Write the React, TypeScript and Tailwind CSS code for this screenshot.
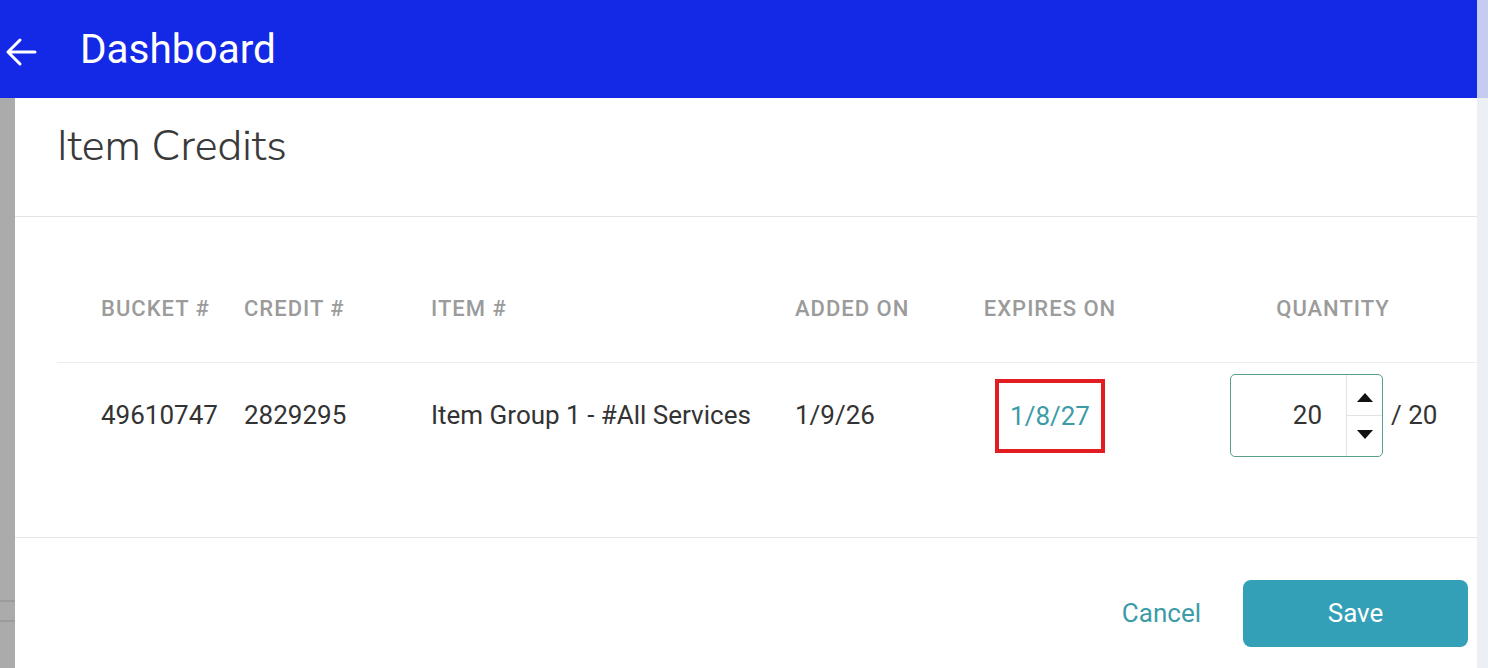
import React from "react";

const roboto = { fontFamily: "Roboto, 'Liberation Sans', sans-serif" };

function HeaderCell({ children, className = "" }: { children: React.ReactNode; className?: string }) {
  return (
    <div className={`text-[22px] font-medium uppercase tracking-[1px] text-[#9b9b9b] ${className}`}>
      {children}
    </div>
  );
}

function QuantityInput() {
  return (
    <div className="flex items-center">
      <div className="flex h-[83px] w-[153px] overflow-hidden rounded-[5px] border border-[#5a9e8e] bg-white">
        <div className="flex flex-1 items-center justify-end pr-[24px] text-[26px] text-[#333]">20</div>
        <div className="flex w-[36px] flex-col border-l border-[#e2e2e2]">
          <button className="flex flex-1 items-center justify-center border-b border-[#e2e2e2] pt-[4px]">
            <svg width="16" height="9" viewBox="0 0 16 9">
              <path d="M8 0 L16 9 L0 9 Z" fill="#111" />
            </svg>
          </button>
          <button className="flex flex-1 items-center justify-center pb-[4px]">
            <svg width="16" height="9" viewBox="0 0 16 9">
              <path d="M0 0 L16 0 L8 9 Z" fill="#111" />
            </svg>
          </button>
        </div>
      </div>
      <span className="ml-[8px] text-[26px] text-[#333]">/ 20</span>
    </div>
  );
}

export default function App() {
  return (
    <div className="flex h-[668px] w-[1488px] overflow-hidden bg-white" style={roboto}>
      <div className="flex w-[1477px] flex-col">
        {/* top bar */}
        <header className="flex h-[98px] shrink-0 items-center bg-[#1429e6] text-white">
          <svg className="ml-[5px] mt-[6px]" width="32" height="32" viewBox="0 0 32 32" fill="none">
            <path d="M30 16 H3 M15 4 L3 16 L15 28" stroke="white" strokeWidth="3" strokeLinecap="round" strokeLinejoin="round" />
          </svg>
          <h1 className="ml-[43px] text-[40.5px] leading-none">Dashboard</h1>
        </header>

        <div className="flex flex-1">
          {/* backdrop edge */}
          <div className="flex w-[15px] shrink-0 flex-col bg-[#ababab]">
            <div className="h-[502px]" />
            <div className="h-[2px] bg-[#9c9c9c]" />
            <div className="h-[18px]" />
            <div className="h-[2px] bg-[#9c9c9c]" />
          </div>

          {/* modal */}
          <div className="flex flex-1 flex-col bg-white">
            <div className="h-[119px] border-b border-[#e3e3e3] pl-[42px] pt-[24px]">
              <h2
                className="text-[43px] font-light leading-[48px] text-[#3a3a3a]"
                style={{ fontFamily: "'Nunito Sans', Lato, 'Open Sans', sans-serif" }}
              >
                Item Credits
              </h2>
            </div>

            <div className="pl-[42px]">
              <div className="flex border-b border-[#ececec] pb-[41px] pl-[44px] pt-[80px] leading-[24px]">
                <HeaderCell className="w-[143px]">Bucket #</HeaderCell>
                <HeaderCell className="w-[187px]">Credit #</HeaderCell>
                <HeaderCell className="w-[364px]">Item #</HeaderCell>
                <HeaderCell className="w-[188px]">Added On</HeaderCell>
                <HeaderCell className="w-[134px] whitespace-nowrap text-center">Expires On</HeaderCell>
                <div className="w-[71px]" />
                <HeaderCell className="w-[290px] text-center">Quantity</HeaderCell>
              </div>

              <div className="flex items-center pb-[80px] pl-[44px] pt-[11px] text-[26px] text-[#333]">
                <div className="w-[143px]">49610747</div>
                <div className="w-[187px]">2829295</div>
                <div className="w-[364px]">Item Group 1 - #All Services</div>
                <div className="w-[188px]">1/9/26</div>
                <div className="flex w-[134px] justify-center">
                  <div className="border-4 border-[#e21d22] px-[11px] py-[18px] leading-[30px] text-[#3d9ba8]">
                    1/8/27
                  </div>
                </div>
                <div className="w-[113px]" />
                <QuantityInput />
              </div>
            </div>

            <div className="flex items-center justify-end border-t border-[#e6e6e6] pr-[10px] pt-[42px]">
              <button className="mr-[42px] text-[26px] text-[#3d9ba8]">Cancel</button>
              <button className="h-[67px] w-[225px] rounded-[8px] bg-[#34a0b7] text-[26px] text-white">Save</button>
            </div>
          </div>
        </div>
      </div>

      {/* scrollbar edge */}
      <div className="flex w-[11px] flex-col">
        <div className="h-[98px] bg-[#c6ccf0]" />
        <div className="flex-1 bg-[#eceff4]" />
      </div>
    </div>
  );
}
